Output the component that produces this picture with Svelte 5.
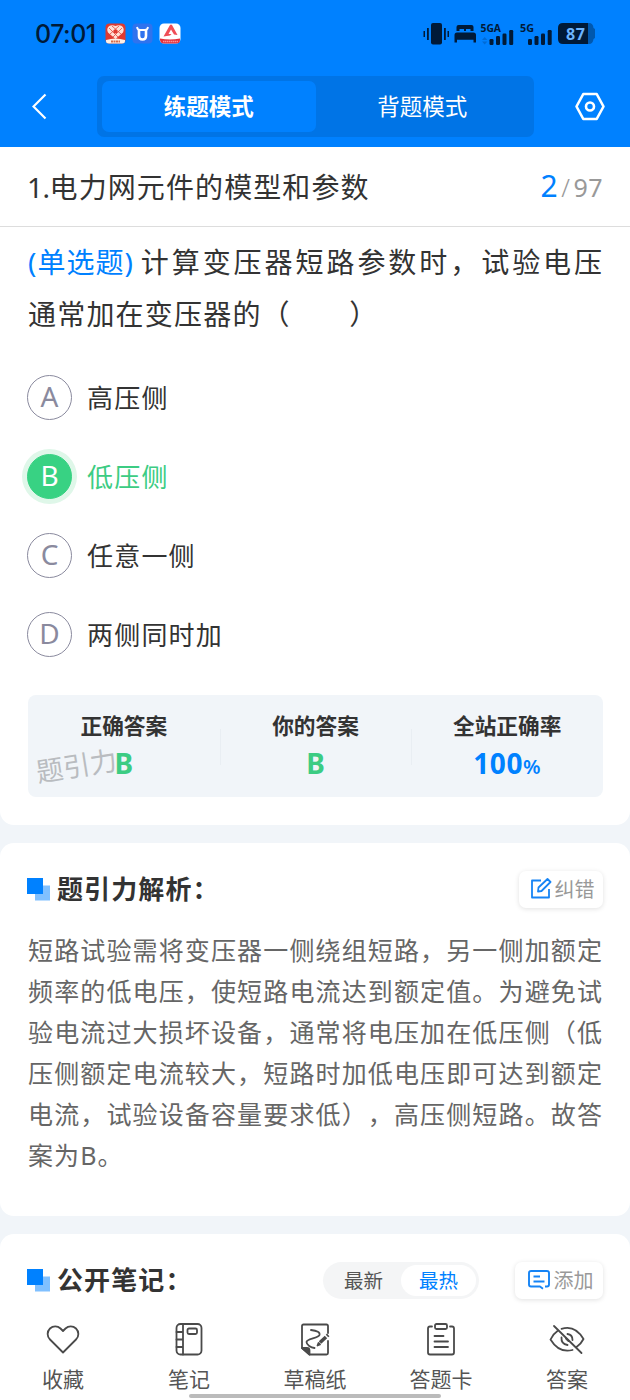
<script lang="ts">
    const options = [
        { key: "A", text: "高压侧" },
        { key: "B", text: "低压侧" },
        { key: "C", text: "任意一侧" },
        { key: "D", text: "两侧同时加" },
    ];

    const answer = "B";
    let selected = $state("B");
    let mode = $state("练题模式");
    let sort = $state("最热");

    const analysis =
        "短路试验需将变压器一侧绕组短路，另一侧加额定频率的低电压，使短路电流达到额定值。为避免试验电流过大损坏设备，通常将电压加在低压侧（低压侧额定电流较大，短路时加低电压即可达到额定电流，试验设备容量要求低），高压侧短路。故答案为B。";
</script>

{#snippet squares()}
    <svg class="squares" width="23" height="23" viewBox="0 0 23 23">
        <rect x="8" y="7.5" width="15" height="15" fill="#80c0ff" />
        <rect width="16" height="16" fill="#0081ff" />
    </svg>
{/snippet}

<div class="page">
    <header>
        <div class="status">
            <span class="time">07:01</span>
            <svg class="apps" width="76" height="22" viewBox="0 0 76 22">
                <rect x="0.5" y="0.5" width="20" height="20" rx="4" fill="#e03a31" />
                <path d="M10.5 16 3 9.5C.5 4.5 5 .5 10.5 3 16 .5 20.5 4.5 18 9.5Z" fill="#ffe0d6" />
                <path d="m4 5 9 9M7 3l9 8M17 5l-9 9M14 3l-9 8" stroke="#e4483c" stroke-width="0.8" />
                <circle cx="10.5" cy="8.5" r="2" fill="#e03a31" />
                <path d="M1 17q9.500-3 19 0v1q0 2.500-3 2.500H4q-3 0-3-2.500z" fill="#fff0e4" />
                <path d="M6 18.500h9" stroke="#d96c48" stroke-width="2" stroke-dasharray="2 .5" />
                <rect x="27.5" y="0.5" width="20" height="20" rx="4" fill="#2f73ee" />
                <path d="M32 4q.5 3 3 3h5q2.500 0 3-3" fill="none" stroke="#fff" stroke-width="1.8" />
                <path d="M34 7v6q0 3.500 3.500 3.500T41 13V7" fill="none" stroke="#fff" stroke-width="2.6" />
                <rect x="54.5" y="0.5" width="21" height="20" rx="4.5" fill="#fff" />
                <path d="M58.500 13.500 65 2q1-1 2 0l5.500 10-3.500-.5-3-5-2.500 4.500 3 0-1.500 1.500z" fill="#ef4d56" />
                <path d="M55 15.500q10 2 20 0V17q0 3.500-4 3.500H59q-3.500 0-4-3.500z" fill="#e3303c" />
                <path d="M58 18.500h15" stroke="#ff9095" stroke-width="1.5" stroke-dasharray="1.5 .5" />
            </svg>
            <svg class="signals" width="172" height="24" viewBox="423 22 172 24">
                <g fill="#001a38">
                    <rect x="431" y="23" width="11" height="21.5" rx="2" />
                    <rect x="427" y="28" width="1.8" height="12" />
                    <rect x="423.5" y="31" width="1.5" height="6" />
                    <rect x="444" y="28" width="1.8" height="12" />
                    <rect x="447.5" y="31" width="1.5" height="6" />
                    <path d="M456.500 31v-4q0-2 2-2h13q2 0 2 2v4h-3v-2h-4.500v2h-2v-2h-4.500v2zM454.500 42.500V35q0-2.500 2.500-2.500h16.500q2.500 0 2.500 2.500v7.500h-2.500v-2.700h-16.500v2.700z" />
                    <rect x="489.5" y="39" width="4" height="6" rx="1.2" />
                    <rect x="496" y="36" width="4" height="9" rx="1.2" />
                    <rect x="502.5" y="33.5" width="4" height="11.5" rx="1.2" />
                    <rect x="509.2" y="30" width="4" height="15" rx="1.2" />
                    <rect x="528" y="39" width="4" height="6" rx="1.2" />
                    <rect x="534.5" y="36" width="4" height="9" rx="1.2" />
                    <rect x="541" y="33.5" width="4" height="11.5" rx="1.2" />
                    <rect x="547.7" y="30" width="4" height="15" rx="1.2" />
                </g>
                <path d="m482 40 2.700-3 2.700 3zM482 41.500h5.400l-2.700 3z" fill="#006bd6" />
                <text x="480.5" y="32" class="net" textLength="20.5" lengthAdjust="spacingAndGlyphs">5GA</text>
                <text x="520" y="32" class="net" textLength="14" lengthAdjust="spacingAndGlyphs">5G</text>
                <path d="M587 23h2q4 0 4.500 5 2 1 2 3v5q0 2-2 3-.5 5-4.500 5h-2z" fill="#0058ae" />
                <path d="M563 23h25v21h-25q-5 0-5-5V28q0-5 5-5z" fill="#001a38" />
                <text x="566" y="40.3" class="battery" textLength="19">87</text>
            </svg>
        </div>
        <div class="nav">
            <svg class="back" width="16" height="28" viewBox="0 0 16 28">
                <path d="M13.500 1.500 1.500 13.500l12 12" fill="none" stroke="#fff" stroke-width="2.2" />
            </svg>
            <div class="modes">
                {#each ["练题模式", "背题模式"] as m}
                    <button class:active={mode === m} onclick={() => (mode = m)}>{m}</button>
                {/each}
            </div>
            <svg class="gear" width="32" height="30" viewBox="0 0 32 30">
                <path d="M9.300 2h13.400L29.500 14.500l-6.800 12.500H9.300L2.500 14.500z" fill="none" stroke="#fff" stroke-width="2.6" stroke-linejoin="round" />
                <circle cx="16" cy="14.5" r="4" fill="none" stroke="#fff" stroke-width="2.6" />
            </svg>
        </div>
    </header>

    <section class="chapter">
        <h1><span class="index">1.</span>电力网元件的模型和参数</h1>
        <div class="progress"><b>2</b><i>/</i>97</div>
    </section>

    <section class="card question">
        <div class="stem">
            <div class="line full">
                <span class="type">(单选题)</span>
                <span class="rest">计算变压器短路参数时，试验电压</span>
            </div>
            <div class="line">通常加在变压器的（　　）</div>
        </div>

        <div class="options">
            {#each options as option}
                <button
                    class="option"
                    class:right={selected === option.key && option.key === answer}
                    onclick={() => (selected = option.key)}
                >
                    <span class="key">{option.key}</span>
                    <span class="text">{option.text}</span>
                </button>
            {/each}
        </div>

        <div class="result">
            <div class="cell">
                <h3>正确答案</h3>
                <div class="value">{answer}</div>
            </div>
            <div class="cell">
                <h3>你的答案</h3>
                <div class="value">{selected}</div>
            </div>
            <div class="cell">
                <h3>全站正确率</h3>
                <div class="value rate">100<small>%</small></div>
            </div>
            <span class="watermark">题引力</span>
        </div>
    </section>

    <section class="card analysis">
        <div class="head">
            {@render squares()}
            <h2>题引力解析：</h2>
            <button class="tool">
                <svg width="22" height="22" viewBox="0 0 22 22" fill="none" stroke="#1684f5" stroke-width="1.8" stroke-linejoin="round">
                    <path d="M11 2.500H2v17h17V11" />
                    <path d="m8 13.500.5-4L17.500 1l3 3-9 9z" />
                </svg>
                <span>纠错</span>
            </button>
        </div>
        <p>{analysis}</p>
    </section>

    <section class="card notes">
        <div class="head">
            {@render squares()}
            <h2>公开笔记：</h2>
            <div class="sort">
                {#each ["最新", "最热"] as s}
                    <button class:active={sort === s} onclick={() => (sort = s)}>{s}</button>
                {/each}
            </div>
            <button class="tool wide">
                <svg width="24" height="22" viewBox="0 0 24 22" fill="none" stroke="#1684f5" stroke-width="1.9" stroke-linejoin="round">
                    <path d="M11 17.500H4q-2 0-2-2V4q0-2 2-2h16q2 0 2 2v11.500q0 2-2 2h-2M11 17.500h2l3 2.200" />
                    <path d="M6.500 7.500h6.500M6.500 12.500h11" />
                </svg>
                <span>添加</span>
            </button>
        </div>
    </section>

    <footer>
        <div class="item">
            <svg viewBox="0 0 36 36">
                <path d="M18 31.500 5 18.500a7.600 7.600 0 0 1 0-11 7.700 7.700 0 0 1 10.500 0L18 10l2.500-2.500a7.700 7.700 0 0 1 10.500 0 7.600 7.600 0 0 1 0 11z" />
            </svg>
            <span>收藏</span>
        </div>
        <div class="item">
            <svg viewBox="0 0 36 36">
                <rect x="5.5" y="3" width="25" height="30.5" rx="4" />
                <path d="M12 3v30.500M5.500 11H12M5.500 18.500H12M5.500 26H12" />
                <rect x="16.5" y="7.5" width="9.5" height="5.5" rx="1.5" />
            </svg>
            <span>笔记</span>
        </div>
        <div class="item">
            <svg viewBox="0 0 36 36">
                <path d="M31 12V5q0-1.500-1.500-1.500h-23Q5 3.500 5 5v22l7.500 6.500h17q1.500 0 1.500-1.500V20" />
                <path d="M5 27h5q2.500 0 2.500 2.500v4z" fill="#4a4a4a" />
                <path d="M14 9q9.500 1 8.500 5c-1 3-13 4-13 7s4.500 5.500 8 6" />
                <path d="m23 21.500 6-5.500" stroke-width="3.6" stroke-linecap="butt" />
                <path d="m30 15 1.200-1.100" stroke-width="3.6" stroke-linecap="butt" />
                <path d="m20.500 24.500 1-2.500 1.500 1.500z" fill="#4a4a4a" />
            </svg>
            <span>草稿纸</span>
        </div>
        <div class="item">
            <svg viewBox="0 0 36 36">
                <path d="M9 5.500H7q-2 0-2 2v24q0 2 2 2h22q2 0 2-2v-24q0-2-2-2h-2" />
                <rect x="12" y="3" width="12" height="5" rx="1.5" />
                <path d="M11.500 15h9M11.500 20.500h13.500M11.500 26h13.500" />
            </svg>
            <span>答题卡</span>
        </div>
        <div class="item">
            <svg viewBox="0 0 36 36">
                <path d="M12.500 7.800Q26 3.500 34.500 18 32 23 27.500 26M23.500 29Q10 32.500 1.500 18.500 4 13 8.500 10" />
                <path d="M18.500 13q5 .5 5 6M12.500 16.500q-.5 6.500 6 7.500M17 17.500l2.500 2.500" />
                <path d="m5 5 27.500 27" />
            </svg>
            <span>答案</span>
        </div>
    </footer>
    <div class="home-bar"></div>
</div>

<style>
    :global(body) {
        margin: 0;
        background: #f1f5f9;
    }

    .page {
        position: relative;
        display: flex;
        flex-direction: column;
        width: 630px;
        height: 1400px;
        overflow: hidden;
        background: #f1f5f9;
        color: #333;
        font-family: "Noto Sans", "Noto Sans CJK SC", sans-serif;
        text-spacing-trim: space-all;
    }

    h1,
    h2,
    h3,
    p {
        margin: 0;
    }

    button {
        padding: 0;
        border: 0;
        background: none;
        color: inherit;
        font: inherit;
    }

    svg {
        flex: none;
    }

    header {
        height: 147px;
        background: #0081ff;
    }

    .status {
        display: flex;
        align-items: center;
        height: 68px;
        padding: 0 35px;
        box-sizing: border-box;
    }

    .time {
        width: 70px;
        color: #001a38;
        font: 500 25px/30px Inter, sans-serif;
        letter-spacing: -0.5px;
    }

    .signals {
        margin-left: auto;
    }

    .net {
        fill: #001a38;
        font: 700 10px "Noto Sans", sans-serif;
    }

    .battery {
        fill: #6cb4ff;
        font: 700 16px "Noto Sans", sans-serif;
    }

    .nav {
        display: flex;
        align-items: center;
        padding: 8px 24px 0 32px;
    }

    .modes {
        display: flex;
        width: 427px;
        height: 51px;
        margin: 0 auto 0 49px;
        padding: 5px;
        border-radius: 7px;
        background: #0074e6;
    }

    .modes button {
        flex: 1;
        padding-bottom: 3px;
        border-radius: 7px;
        color: #fff;
        font-size: 22.5px;
    }

    .modes .active {
        background: #0081ff;
        font-weight: 700;
    }

    .chapter {
        display: flex;
        align-items: center;
        justify-content: space-between;
        height: 79px;
        padding: 0 27px 0 28px;
        border-bottom: 1px solid #ddd;
        background: #fff;
    }

    h1 {
        padding-bottom: 2px;
        font-size: 28px;
        font-weight: 400;
        letter-spacing: 1.1px;
    }

    .index {
        margin-left: -1px;
        letter-spacing: -0.5px;
    }

    .progress {
        padding-bottom: 2px;
        color: #999;
        font: 400 25px "Noto Sans", sans-serif;
        letter-spacing: 0.5px;
    }

    .progress b {
        color: #0081ff;
        font-size: 30px;
        font-weight: 400;
    }

    .progress i {
        margin: 0 3px;
        font-style: normal;
        font-weight: 300;
    }

    .card {
        margin-bottom: 18px;
        padding: 0 27px 0 28px;
        border-radius: 14px;
        background: #fff;
    }

    .question {
        height: 598px;
        border-radius: 0 0 14px 14px;
    }

    .stem {
        padding-top: 9px;
        font-size: 28px;
        line-height: 52px;
        letter-spacing: 1.2px;
    }

    .line {
        white-space: nowrap;
    }

    .full {
        display: flex;
        justify-content: space-between;
    }

    .type {
        color: #0081ff;
        letter-spacing: 1px;
    }

    .rest {
        margin-right: -2px;
        letter-spacing: 2.95px;
    }

    .options {
        display: flex;
        flex-direction: column;
        gap: 34px;
        margin: 35px 0 38px -1px;
    }

    .option {
        display: flex;
        align-items: center;
        gap: 15px;
        height: 45px;
        font-size: 26px;
        letter-spacing: 1.2px;
    }

    .text {
        padding-bottom: 2px;
    }

    .key {
        display: flex;
        justify-content: center;
        box-sizing: border-box;
        width: 45px;
        height: 45px;
        border: 1.5px solid #8a8a9e;
        border-radius: 50%;
        color: #8a8a9e;
        font-size: 28px;
        line-height: 41px;
        letter-spacing: 0;
    }

    .right {
        color: #3ccc83;
    }

    .right .key {
        border-color: #38d283;
        background: #38d283;
        box-shadow: 0 0 0 5px #dff7e9;
        color: #fff;
    }

    .result {
        position: relative;
        display: flex;
        height: 102px;
        border-radius: 8px;
        background: #f1f5f9;
        text-align: center;
    }

    .cell {
        flex: 1;
        padding-top: 14px;
    }

    .cell + .cell {
        background: linear-gradient(#e9eef3, #e9eef3) 0 34px / 1px 36px no-repeat;
    }

    h3 {
        font-size: 21.7px;
        line-height: 34px;
    }

    .value {
        color: #3ccc83;
        font-size: 28px;
        font-weight: 700;
        line-height: 40px;
    }

    .rate {
        color: #0081ff;
        letter-spacing: 0.6px;
    }

    .value small {
        font-size: 20px;
        font-weight: 600;
    }

    .watermark {
        position: absolute;
        left: 8px;
        top: 51px;
        color: #b9bcc0;
        font-size: 27px;
        line-height: 40px;
        transform: rotate(-9deg);
    }

    .analysis {
        height: 373px;
    }

    .head {
        display: flex;
        align-items: center;
        height: 92px;
    }

    .squares {
        margin: 0 7px 0 -1px;
    }

    h2 {
        font-size: 26px;
        line-height: 40px;
        letter-spacing: 1.1px;
        white-space: nowrap;
    }

    .tool {
        display: flex;
        align-items: center;
        justify-content: center;
        gap: 3px;
        width: 84px;
        height: 37px;
        margin-left: auto;
        padding-left: 2px;
        box-sizing: border-box;
        border-radius: 7px;
        box-shadow: 0 1px 5px rgb(0 0 0 / 0.12);
        color: #999;
        font-size: 20px;
        white-space: nowrap;
    }

    .tool span {
        padding-bottom: 2px;
    }

    .tool.wide {
        width: 88px;
        margin-left: 36px;
    }

    .analysis p {
        margin-top: -5px;
        color: #666;
        font-size: 25px;
        line-height: 41px;
        letter-spacing: 1.08px;
        text-align: justify;
        text-justify: inter-character;
    }

    .notes {
        height: 92px;
        margin-bottom: 0;
        border-radius: 14px 14px 0 0;
    }

    .sort {
        display: flex;
        width: 150px;
        height: 31px;
        margin-left: auto;
        padding: 3px;
        border-radius: 19px;
        background: #f4f5f6;
    }

    .sort button {
        flex: 1;
        border-radius: 16px;
        color: #555;
        font-size: 19.5px;
        line-height: 31px;
    }

    .sort .active {
        background: #fff;
        color: #0081ff;
    }

    footer {
        display: flex;
        flex: 1;
        background: #fff;
    }

    .item {
        display: flex;
        flex: 1;
        flex-direction: column;
        align-items: center;
        color: #555;
        font-size: 21px;
        line-height: 30px;
    }

    .item svg {
        width: 36px;
        height: 36px;
        margin: -5px 0 7px;
        fill: none;
        stroke: #4a4a4a;
        stroke-width: 1.8;
        stroke-linecap: round;
        stroke-linejoin: round;
    }

    .home-bar {
        position: absolute;
        left: 189px;
        bottom: 2px;
        width: 252px;
        height: 4px;
        border-radius: 2px;
        background: #bbb;
    }
</style>
